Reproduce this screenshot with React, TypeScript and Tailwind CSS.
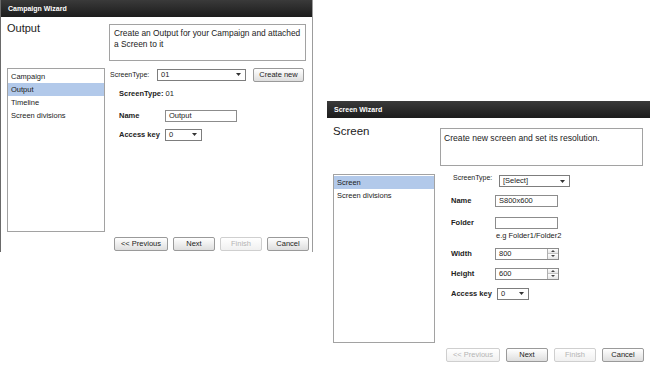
import type { ReactNode } from 'react';

const font = "font-['Liberation_Sans',Arial,sans-serif]";

function TitleBar({ title }: { title: string }) {
  return (
    <div className="h-[17px] flex items-center pl-[7px] bg-gradient-to-b from-[#3a3a3a] to-[#1c1c1c]">
      <span className="text-[7px] font-bold text-white leading-none">{title}</span>
    </div>
  );
}

function Btn({ label, width, disabled }: { label: string; width: string; disabled?: boolean }) {
  return (
    <div
      className={`${width} h-[14px] flex items-center justify-center rounded-[2px] border text-[7.5px] leading-none ${
        disabled
          ? 'border-[#cfcfcf] bg-gradient-to-b from-white to-[#f0f0f0] text-[#b4b4b4]'
          : 'border-[#9a9a9a] bg-gradient-to-b from-white to-[#dedede] text-[#222]'
      }`}
    >
      {label}
    </div>
  );
}

function Select({ value, width }: { value: string; width: string }) {
  return (
    <div className={`${width} h-[12px] flex items-center justify-between border border-[#7d7d7d] bg-white pl-[3px] pr-[4px]`}>
      <span className="text-[7.5px] leading-none text-[#222]">{value}</span>
      <svg width="5" height="3" viewBox="0 0 5 3">
        <path d="M0 0 H5 L2.5 3 Z" fill="#333" />
      </svg>
    </div>
  );
}

function TextInput({ value, width }: { value?: string; width: string }) {
  return (
    <div className={`${width} h-[12px] flex items-center border border-[#8c8c8c] bg-white pl-[3px]`}>
      <span className="text-[7.5px] leading-none text-[#222]">{value}</span>
    </div>
  );
}

function Spinner({ value }: { value: string }) {
  return (
    <div className="w-[64px] h-[12px] flex border border-[#8c8c8c] bg-white">
      <div className="flex-1 flex items-center pl-[3px]">
        <span className="text-[7.5px] leading-none text-[#222]">{value}</span>
      </div>
      <div className="w-[11px] flex flex-col border-l border-[#b0b0b0]">
        <div className="flex-1 flex items-center justify-center bg-gradient-to-b from-white to-[#e6e6e6] border-b border-[#c4c4c4]">
          <svg width="4" height="2" viewBox="0 0 4 2">
            <path d="M0 2 H4 L2 0 Z" fill="#444" />
          </svg>
        </div>
        <div className="flex-1 flex items-center justify-center bg-gradient-to-b from-white to-[#e6e6e6]">
          <svg width="4" height="2" viewBox="0 0 4 2">
            <path d="M0 0 H4 L2 2 Z" fill="#444" />
          </svg>
        </div>
      </div>
    </div>
  );
}

function ListBox({ items, selected, className }: { items: string[]; selected: string; className: string }) {
  return (
    <div className={`${className} border border-[#a2a2a2] bg-white pt-px`}>
      {items.map((item) => (
        <div
          key={item}
          className={`h-[13px] flex items-center pl-[3px] text-[7.5px] leading-none text-[#222] ${
            item === selected ? 'bg-[#b2c9ea]' : ''
          }`}
        >
          {item}
        </div>
      ))}
    </div>
  );
}

function Field({ label, labelWidth, children }: { label: string; labelWidth: string; children: ReactNode }) {
  return (
    <div className="flex items-center">
      <span className={`${labelWidth} text-[7.5px] font-bold leading-none text-[#222]`}>{label}</span>
      {children}
    </div>
  );
}

function CampaignWizard() {
  return (
    <div className="absolute left-0 top-0 w-[313px] h-[252px] bg-white border-l border-l-[#6a6a6a] border-r border-r-[#9c9c9c]">
      <TitleBar title="Campaign Wizard" />
      <div className="pl-[6px]">
        <div className="flex items-start pt-[7px]">
          <div className="w-[102px] text-[11px] leading-none text-[#222] -mt-px">Output</div>
          <div className="w-[197px] h-[37px] border border-[#a2a2a2] px-[4px] pt-[3px] text-[8.4px] leading-[11px] text-[#222]">
            Create an Output for your Campaign and attached a Screen to it
          </div>
        </div>
        <div className="flex items-start mt-[7px]">
          <ListBox
            className="w-[98px] h-[164px]"
            items={['Campaign', 'Output', 'Timeline', 'Screen divisions']}
            selected="Output"
          />
          <div className="ml-[5px] flex flex-col">
            <div className="flex items-center h-[13px]">
              <span className="w-[47px] text-[7px] leading-none text-[#222]">ScreenType:</span>
              <Select value="01" width="w-[89px]" />
              <div className="ml-[7px]">
                <Btn label="Create new" width="w-[51px]" />
              </div>
            </div>
            <div className="ml-[9px] mt-[9px] text-[7.5px] leading-none text-[#222]">
              <span className="font-bold">ScreenType:</span> 01
            </div>
            <div className="ml-[9px] mt-[12px]">
              <Field label="Name" labelWidth="w-[46px]">
                <TextInput value="Output" width="w-[72px]" />
              </Field>
            </div>
            <div className="ml-[9px] mt-[7px]">
              <Field label="Access key" labelWidth="w-[46px]">
                <Select value="0" width="w-[37px]" />
              </Field>
            </div>
          </div>
        </div>
        <div className="flex gap-[5px] mt-[5px] ml-[107px]">
          <Btn label="<< Previous" width="w-[54px]" />
          <Btn label="Next" width="w-[42px]" />
          <Btn label="Finish" width="w-[42px]" disabled />
          <Btn label="Cancel" width="w-[42px]" />
        </div>
      </div>
    </div>
  );
}

function ScreenWizard() {
  return (
    <div className="absolute left-[327px] top-[101px] w-[323px] h-[264px] bg-white">
      <TitleBar title="Screen Wizard" />
      <div className="pl-[6px]">
        <div className="flex items-start pt-[10px]">
          <div className="w-[107px] text-[11.5px] leading-none text-[#222] -mt-[2px]">Screen</div>
          <div className="w-[203px] h-[38px] border border-[#a2a2a2] px-[3px] pt-[4px] text-[8.6px] leading-[11px] text-[#222]">
            Create new screen and set its resolution.
          </div>
        </div>
        <div className="flex items-start mt-[8px]">
          <ListBox
            className="w-[102px] h-[169px]"
            items={['Screen', 'Screen divisions']}
            selected="Screen"
          />
          <div className="ml-[16px] flex flex-col">
            <div className="flex items-start h-[12px] mt-px ml-[2px]">
              <span className="w-[46px] text-[7px] leading-none text-[#222] -mt-px">ScreenType:</span>
              <Select value="[Select]" width="w-[71px]" />
            </div>
            <div className="mt-[8px]">
              <Field label="Name" labelWidth="w-[44px]">
                <TextInput value="S800x600" width="w-[63px]" />
              </Field>
            </div>
            <div className="mt-[10px]">
              <Field label="Folder" labelWidth="w-[44px]">
                <TextInput width="w-[63px]" />
              </Field>
            </div>
            <div className="ml-[45px] mt-[3px] text-[7.5px] leading-none text-[#222]">e.g Folder1/Folder2</div>
            <div className="mt-[8px]">
              <Field label="Width" labelWidth="w-[44px]">
                <Spinner value="800" />
              </Field>
            </div>
            <div className="mt-[8px]">
              <Field label="Height" labelWidth="w-[44px]">
                <Spinner value="600" />
              </Field>
            </div>
            <div className="mt-[8px]">
              <Field label="Access key" labelWidth="w-[46px]">
                <Select value="0" width="w-[32px]" />
              </Field>
            </div>
          </div>
        </div>
        <div className="flex gap-[6px] mt-[5px] ml-[113px]">
          <Btn label="<< Previous" width="w-[54px]" disabled />
          <Btn label="Next" width="w-[42px]" />
          <Btn label="Finish" width="w-[42px]" disabled />
          <Btn label="Cancel" width="w-[42px]" />
        </div>
      </div>
    </div>
  );
}

export default function App() {
  return (
    <div className={`relative w-[650px] h-[365px] bg-white overflow-hidden ${font}`}>
      <CampaignWizard />
      <ScreenWizard />
    </div>
  );
}
